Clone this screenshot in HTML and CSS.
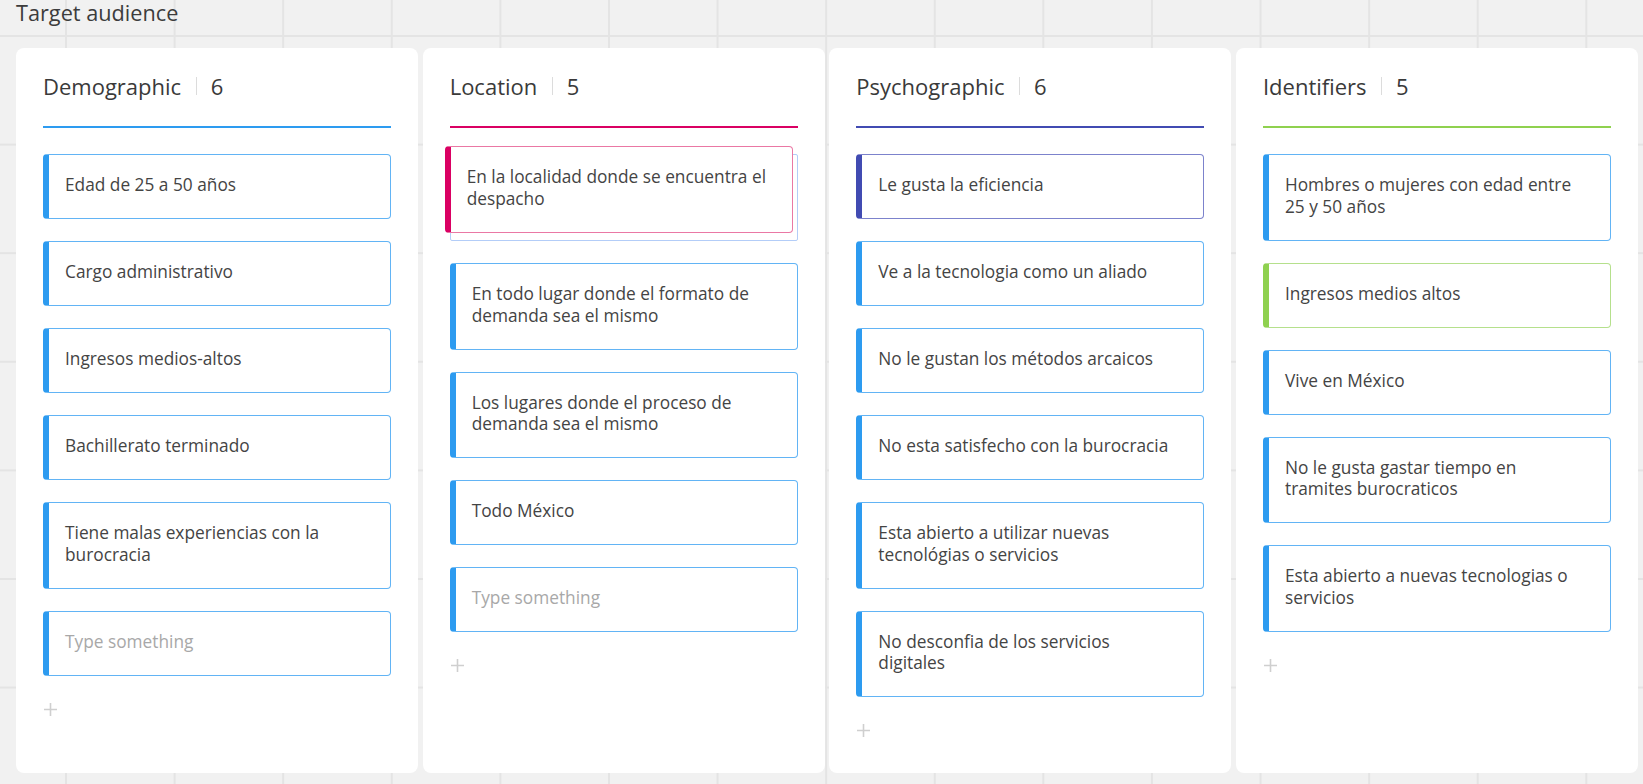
FILE: index.html
```html
<!DOCTYPE html>
<html lang="es">
<head>
<meta charset="utf-8">
<title>Target audience</title>
<link rel="stylesheet" href="styles.css">
</head>
<body>
<div class="board">
  <div class="frame-title">Target audience</div>
  <div class="columns">

    <section class="column">
      <header class="col-head c-blue">
        <span class="col-name">Demographic</span><span class="sep"></span><span class="count">6</span>
      </header>
      <div class="cards">
        <div class="card">Edad de 25 a 50 años</div>
        <div class="card">Cargo administrativo</div>
        <div class="card">Ingresos medios-altos</div>
        <div class="card">Bachillerato terminado</div>
        <div class="card">Tiene malas experiencias con la<br>burocracia</div>
        <div class="card placeholder">Type something</div>
      </div>
      <div class="add"><svg viewBox="0 0 13 13" width="13" height="13"><path d="M6.5 0v13M0 6.5h13" stroke="#cfcfcf" stroke-width="1.6" fill="none"/></svg></div>
    </section>

    <section class="column">
      <header class="col-head c-pink">
        <span class="col-name">Location</span><span class="sep"></span><span class="count">5</span>
      </header>
      <div class="cards">
        <div class="drop-slot">
          <div class="card dragging pink">En la localidad donde se encuentra el<br>despacho</div>
        </div>
        <div class="card">En todo lugar donde el formato de<br>demanda sea el mismo</div>
        <div class="card">Los lugares donde el proceso de<br>demanda sea el mismo</div>
        <div class="card">Todo México</div>
        <div class="card placeholder">Type something</div>
      </div>
      <div class="add"><svg viewBox="0 0 13 13" width="13" height="13"><path d="M6.5 0v13M0 6.5h13" stroke="#cfcfcf" stroke-width="1.6" fill="none"/></svg></div>
    </section>

    <section class="column">
      <header class="col-head c-indigo">
        <span class="col-name">Psychographic</span><span class="sep"></span><span class="count">6</span>
      </header>
      <div class="cards">
        <div class="card indigo">Le gusta la eficiencia</div>
        <div class="card">Ve a la tecnologia como un aliado</div>
        <div class="card">No le gustan los métodos arcaicos</div>
        <div class="card">No esta satisfecho con la burocracia</div>
        <div class="card">Esta abierto a utilizar nuevas<br>tecnológias o servicios</div>
        <div class="card">No desconfia de los servicios<br>digitales</div>
      </div>
      <div class="add"><svg viewBox="0 0 13 13" width="13" height="13"><path d="M6.5 0v13M0 6.5h13" stroke="#cfcfcf" stroke-width="1.6" fill="none"/></svg></div>
    </section>

    <section class="column">
      <header class="col-head c-green">
        <span class="col-name">Identifiers</span><span class="sep"></span><span class="count">5</span>
      </header>
      <div class="cards">
        <div class="card">Hombres o mujeres con edad entre<br>25 y 50 años</div>
        <div class="card green">Ingresos medios altos</div>
        <div class="card">Vive en México</div>
        <div class="card">No le gusta gastar tiempo en<br>tramites burocraticos</div>
        <div class="card">Esta abierto a nuevas tecnologias o<br>servicios</div>
      </div>
      <div class="add"><svg viewBox="0 0 13 13" width="13" height="13"><path d="M6.5 0v13M0 6.5h13" stroke="#cfcfcf" stroke-width="1.6" fill="none"/></svg></div>
    </section>

  </div>
</div>
</body>
</html>
```

FILE: styles.css
```css
html, body {
  margin: 0;
  padding: 0;
}

body {
  width: 1643px;
  height: 784px;
  overflow: hidden;
  font-family: "Open Sans", "Noto Sans", sans-serif;
  color: #333333;
  background-color: #f1f1f1;
  background-image:
    linear-gradient(to right, #e4e4e4 0, #e4e4e4 1.5px, transparent 1.5px),
    linear-gradient(to bottom, #e4e4e4 0, #e4e4e4 1.5px, transparent 1.5px);
  background-size: 108.6px 108.6px;
  background-position: 65px 35px;
}

.board {
  display: flex;
  flex-direction: column;
}

.frame-title {
  height: 48px;
  padding-left: 16px;
  font-size: 21.7px;
  line-height: 26px;
  color: #3c3c3c;
  box-sizing: border-box;
}

.columns {
  display: flex;
  gap: 4.67px;
  padding-left: 16px;
}

.column {
  width: 402px;
  height: 725px;
  box-sizing: border-box;
  background: #ffffff;
  border-radius: 8px;
  padding: 22.5px 27px 0 27px;
}

.col-head {
  display: flex;
  align-items: center;
  height: 30px;
  padding-bottom: 25.5px;
  border-bottom: 2px solid #2d9bf0;
  font-size: 22px;
  line-height: 30px;
  color: #3a3a3a;
}

.col-head.c-pink { border-bottom-color: #da0063; }
.col-head.c-indigo { border-bottom-color: #414bb2; }
.col-head.c-green { border-bottom-color: #8fd14f; }

.sep {
  width: 1px;
  height: 18px;
  background: #dcdcdc;
  margin: 0 14px 0 14.5px;
}

.cards {
  display: flex;
  flex-direction: column;
  gap: 22px;
  margin-top: 26px;
}

.card {
  position: relative;
  box-sizing: border-box;
  background: #ffffff;
  border: 1px solid #62b4f5;
  border-left: 6px solid #2d9bf0;
  border-radius: 4px;
  padding: 19px 14px 22.5px 16px;
  font-size: 17.3px;
  line-height: 21.5px;
  color: #444444;
  white-space: nowrap;
}

.card.placeholder { color: #a8a8a8; }

.card.pink {
  border-color: #ea78a4;
  border-left-color: #da0063;
}

.card.indigo {
  border-color: #7c82cc;
  border-left-color: #414bb2;
}

.card.green {
  border-color: #b5e08c;
  border-left-color: #8fd14f;
}

.drop-slot {
  position: relative;
  height: 87px;
  box-sizing: border-box;
  border: 1px solid #b3cdf8;
  border-radius: 2px;
}

.card.dragging {
  position: absolute;
  left: -6px;
  top: -8.6px;
  width: 348px;
  height: 87px;
}

.add {
  margin-top: 27px;
  margin-left: 1px;
  height: 13px;
  display: flex;
}
```
